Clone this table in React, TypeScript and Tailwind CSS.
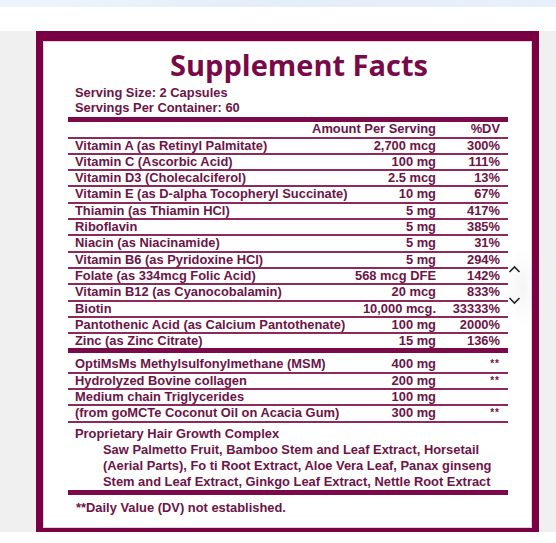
import React from "react";

const vit: [string, string, string][] = [
  ["Vitamin A (as Retinyl Palmitate)", "2,700 mcg", "300%"],
  ["Vitamin C (Ascorbic Acid)", "100 mg", "111%"],
  ["Vitamin D3 (Cholecalciferol)", "2.5 mcg", "13%"],
  ["Vitamin E (as D-alpha Tocopheryl Succinate)", "10 mg", "67%"],
  ["Thiamin (as Thiamin HCl)", "5 mg", "417%"],
  ["Riboflavin", "5 mg", "385%"],
  ["Niacin (as Niacinamide)", "5 mg", "31%"],
  ["Vitamin B6 (as Pyridoxine HCl)", "5 mg", "294%"],
  ["Folate (as 334mcg Folic Acid)", "568 mcg DFE", "142%"],
  ["Vitamin B12 (as Cyanocobalamin)", "20 mcg", "833%"],
  ["Biotin", "10,000 mcg.", "33333%"],
  ["Pantothenic Acid (as Calcium Pantothenate)", "100 mg", "2000%"],
  ["Zinc (as Zinc Citrate)", "15 mg", "136%"],
];

const other: [string, string, string][] = [
  ["OptiMsMs Methylsulfonylmethane (MSM)", "400 mg", "**"],
  ["Hydrolyzed Bovine collagen", "200 mg", "**"],
  ["Medium chain Triglycerides", "100 mg", ""],
  ["(from goMCTe Coconut Oil on Acacia Gum)", "300 mg", "**"],
];

function Row({ r, star }: { r: [string, string, string]; star?: boolean }) {
  return (
    <div className="flex h-[14.3px] items-center leading-[14.3px] pl-[7px] pr-[8px] whitespace-nowrap">
      <span className="flex-1">{r[0]}</span>
      <span className="text-right">{r[1]}</span>
      <span className={"w-[64px] text-right " + (star ? "text-[10px] tracking-[1px]" : "")}>{r[2]}</span>
    </div>
  );
}

export default function App() {
  return (
    <div className="w-[556px] h-[543px] bg-white overflow-hidden" style={{ fontFamily: '"Liberation Sans", Arial, sans-serif' }}>
      <div className="h-[7px] bg-gradient-to-r from-[#eef4fb] via-[#e4eef9] to-[#e8f1fb]" />
      <div className="h-[24px] bg-white" />
      <div className="bg-[#f0f0f0] pl-[36px] pr-[17px]">
        <div className="border-[#7a0044] border-t-[10px] border-x-[7px] border-b-[4px]">
          <div className="relative bg-white border border-[#e8cfdc] pl-[24px] pr-[23px] pt-[8px] pb-[11px] text-[12.9px] font-bold text-[#6c1446]">
            <div
              className="pl-[22px] text-center text-[29px] leading-[30px] font-bold text-[#780a48]"
              style={{ fontFamily: '"Open Sans", sans-serif' }}
            >
              Supplement Facts
            </div>
            <div className="mt-[4.5px] pl-[7px] leading-[15px]">
              <div>Serving Size: 2 Capsules</div>
              <div>Servings Per Container: 60</div>
            </div>
            <div className="mt-[2.8px] h-[5px] bg-[#7a0a48]" />
            <div className="flex h-[14.3px] items-center leading-[14.3px] pl-[7px] pr-[8px] whitespace-nowrap">
              <span className="flex-1" />
              <span className="text-right">Amount Per Serving</span>
              <span className="w-[64px] text-right">%DV</span>
            </div>
            {vit.map((r) => (
              <div key={r[0]}>
                <div className="h-[2px] bg-[#8c2a5e]" />
                <Row r={r} />
              </div>
            ))}
            <div className="h-[5px] bg-[#7a0a48]" />
            <div className="h-[4px]" />
            {other.map((r) => (
              <div key={r[0]}>
                <Row r={r} star />
                <div className="h-[2px] bg-[#8c2a5e]" />
              </div>
            ))}
            <div className="pt-[3.3px] pl-[7px] leading-[16px] whitespace-nowrap">
              <div>Proprietary Hair Growth Complex</div>
              <div className="pl-[28px]">Saw Palmetto Fruit, Bamboo Stem and Leaf Extract, Horsetail</div>
              <div className="pl-[28px]">(Aerial Parts), Fo ti Root Extract, Aloe Vera Leaf, Panax ginseng</div>
              <div className="pl-[28px]">Stem and Leaf Extract, Ginkgo Leaf Extract, Nettle Root Extract</div>
            </div>
            <div className="h-[5px] bg-[#7a0a48]" />
            <div className="mt-[5px] pl-[8px] leading-[16px]">**Daily Value (DV) not established.</div>

            <div className="absolute left-[460px] top-[205px] w-[36px] h-[80px] rounded-full bg-[radial-gradient(closest-side,rgba(0,0,0,0.04),rgba(0,0,0,0))]" />
            <svg className="absolute left-[464px] top-[223px]" width="13" height="9" viewBox="0 0 13 9">
              <path d="M1.5 7 L6.5 2 L11.5 7" fill="none" stroke="#222" strokeWidth="1.6" />
            </svg>
            <svg className="absolute left-[464px] top-[254px]" width="13" height="9" viewBox="0 0 13 9">
              <path d="M1.5 2 L6.5 7 L11.5 2" fill="none" stroke="#222" strokeWidth="1.6" />
            </svg>
          </div>
        </div>
      </div>
    </div>
  );
}
